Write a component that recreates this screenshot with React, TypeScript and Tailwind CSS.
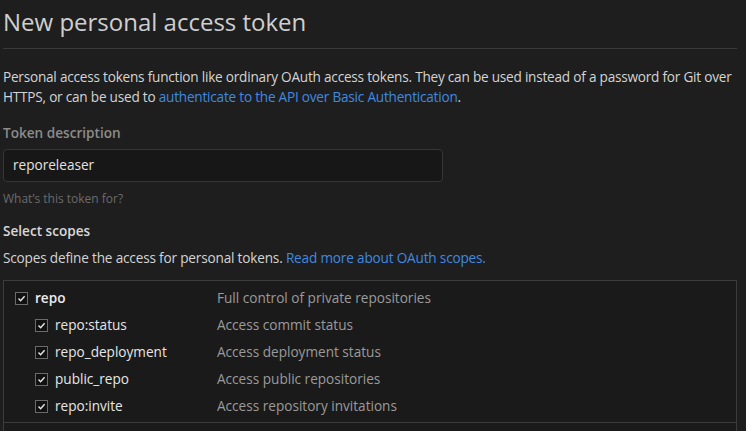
import React from "react";

const scopes = [
  { name: "repo:status", desc: "Access commit status" },
  { name: "repo_deployment", desc: "Access deployment status" },
  { name: "public_repo", desc: "Access public repositories" },
  { name: "repo:invite", desc: "Access repository invitations" },
];

function Check() {
  return (
    <span className="flex h-[13px] w-[13px] shrink-0 items-center justify-center border border-[#6a6a6a] bg-[#111]">
      <svg width="9" height="9" viewBox="0 0 9 9" fill="none">
        <path d="M1.5 4.6 L3.6 6.7 L7.6 2.2" stroke="#e8e8e8" strokeWidth="1.4" />
      </svg>
    </span>
  );
}

export default function App() {
  return (
    <div
      className="h-[431px] w-[746px] overflow-hidden bg-[#1e1e1e] pl-[3px] pr-[9px] text-[13.6px] text-[#d4d4d4]"
      style={{ fontFamily: '"Open Sans", "Noto Sans", sans-serif' }}
    >
      <h1 className="border-b border-[#3a3a3a] pt-[5px] pb-[9px] text-[24px] leading-[34px] text-[#cfcfcf]">
        New personal access token
      </h1>

      <p className="mt-[18px] whitespace-nowrap leading-[20px] tracking-[-0.22px]">
        Personal access tokens function like ordinary OAuth access tokens. They can be used instead of a password for Git over
        <br />
        HTTPS, or can be used to{" "}
        <a className="text-[#3f8ae0]">authenticate to the API over Basic Authentication</a>.
      </p>

      <div className="mt-[16px] font-semibold leading-[20px] text-[#8c8c8c]">Token description</div>
      <div className="mt-[6px] flex h-[33px] w-[440px] items-center rounded-[4px] border border-[#363636] bg-[#171717] px-[9px] text-[#e2e2e2]">
        reporeleaser
      </div>
      <div className="mt-[8px] text-[12px] leading-[18px] text-[#6b6b6b]">What’s this token for?</div>

      <div className="mt-[13px] font-semibold leading-[20px] text-[#d8d8d8]">Select scopes</div>
      <div className="mt-[7px] leading-[20px] tracking-[-0.18px]">
        Scopes define the access for personal tokens.{" "}
        <a className="text-[#3f8ae0]">Read more about OAuth scopes.</a>
      </div>

      <div className="mt-[12px] border border-[#3c3c3c] bg-[#1a1a1a]">
        <div className="border-b border-[#3c3c3c] pt-[7px] pb-[6px]">
          <div className="flex h-[20px] items-center">
            <div className="flex w-[213px] items-center gap-[7px] pl-[11px]">
              <Check />
              <span className="font-semibold text-[#ececec]">repo</span>
            </div>
            <span className="text-[#9a9a9a]">Full control of private repositories</span>
          </div>
          {scopes.map((s) => (
            <div key={s.name} className="mt-[7px] flex h-[20px] items-center">
              <div className="flex w-[213px] items-center gap-[7px] pl-[31px]">
                <Check />
                <span className="text-[#e6e6e6]">{s.name}</span>
              </div>
              <span className="text-[#9a9a9a]">{s.desc}</span>
            </div>
          ))}
        </div>
        <div className="h-[20px]" />
      </div>
    </div>
  );
}
